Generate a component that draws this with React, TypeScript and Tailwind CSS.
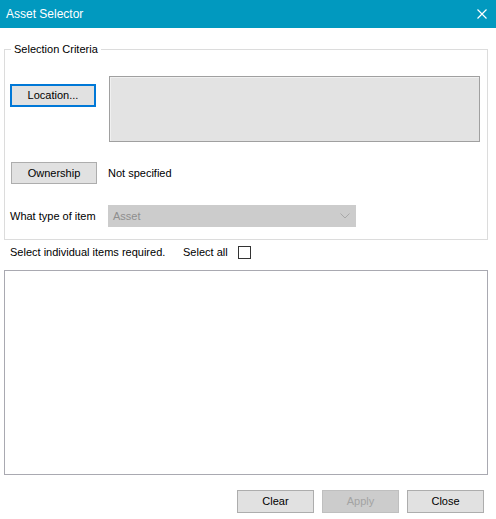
import React from "react";

function WinButton({
  label,
  focused,
  disabled,
  className = "",
}: {
  label: string;
  focused?: boolean;
  disabled?: boolean;
  className?: string;
}) {
  const tone = disabled
    ? "bg-[#cccccc] border-[#bfbfbf] text-[#a3a3a3]"
    : focused
      ? "bg-[#e1e1e1] border-2 border-[#0078d7] text-black"
      : "bg-[#e1e1e1] border-[#adadad] text-black";
  return (
    <button
      disabled={disabled}
      className={`flex items-center justify-center border ${tone} text-[11px] leading-none ${className}`}
    >
      {label}
    </button>
  );
}

export default function App() {
  return (
    <div className="w-[496px] h-[519px] bg-white flex flex-col font-['Liberation_Sans',Arial,sans-serif] text-[11px] text-black overflow-hidden">
      {/* title bar */}
      <div className="h-[28px] bg-[#0199bf] flex items-center justify-between pl-[6px] pr-[9px] shrink-0">
        <span className="text-white text-[12px]">Asset Selector</span>
        <svg width="10" height="10" viewBox="0 0 10 10" className="text-white">
          <path d="M0.5 0.5 L9.5 9.5 M9.5 0.5 L0.5 9.5" stroke="currentColor" strokeWidth="1.2" fill="none" />
        </svg>
      </div>

      <fieldset className="ml-[4px] mt-[14px] w-[484px] border border-[#dcdcdc] pb-[12px]">
        <legend className="ml-[6px] px-[3px] leading-[14px]">Selection Criteria</legend>

        <div className="flex items-start mt-[20px] pl-[5px]">
          <WinButton label="Location..." focused className="w-[86px] h-[23px] mt-[8px]" />
          <div className="ml-[13px] w-[371px] h-[66px] bg-[#e3e3e3] border border-[#a0a0a0] shadow-[inset_1px_1px_0_#f0f0f0]" />
        </div>

        <div className="flex items-center mt-[20px] pl-[6px]">
          <WinButton label="Ownership" className="w-[86px] h-[22px]" />
          <span className="ml-[11px]">Not specified</span>
        </div>

        <div className="flex items-center mt-[21px] pl-[5px]">
          <span className="w-[98px]">What type of item</span>
          <div className="w-[248px] h-[22px] bg-[#cccccc] flex items-center justify-between pl-[5px] pr-[6px] text-[#8e8e8e]">
            <span>Asset</span>
            <svg width="10" height="6" viewBox="0 0 10 6">
              <path d="M0.5 0.5 L5 5 L9.5 0.5" stroke="#a8a8a8" strokeWidth="1" fill="none" />
            </svg>
          </div>
        </div>
      </fieldset>

      <div className="flex items-center h-[24px] pl-[10px]">
        <span className="w-[173px]">Select individual items required.</span>
        <span className="w-[55px]">Select all</span>
        <span className="w-[13px] h-[13px] border border-[#333333] bg-white" />
      </div>

      {/* item list */}
      <div className="ml-[4px] mt-[6px] w-[484px] h-[205px] border border-[#a9a9b1] bg-white" />

      <div className="flex justify-end gap-[8px] mt-[15px] pr-[12px]">
        <WinButton label="Clear" className="w-[77px] h-[23px]" />
        <WinButton label="Apply" disabled className="w-[77px] h-[23px]" />
        <WinButton label="Close" className="w-[77px] h-[23px]" />
      </div>
    </div>
  );
}
